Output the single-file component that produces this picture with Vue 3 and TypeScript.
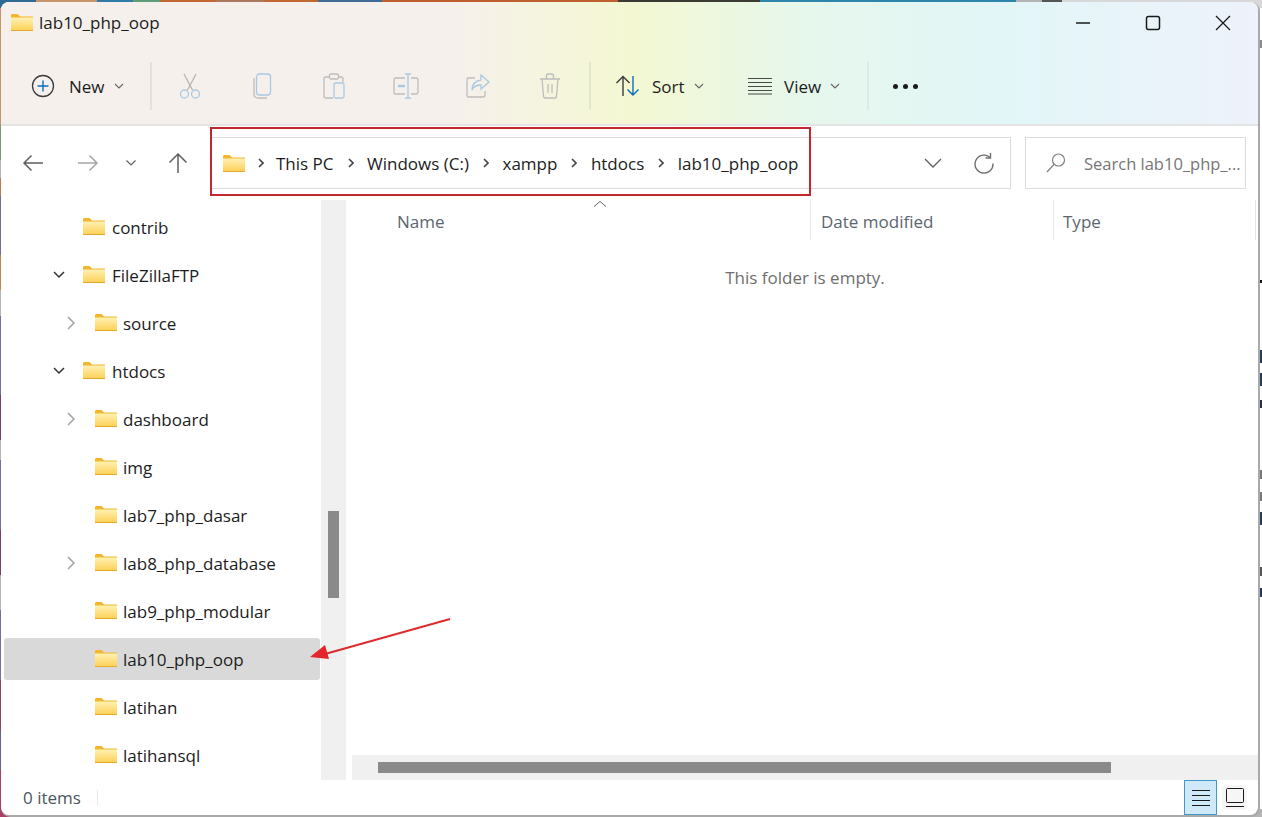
<script setup lang="ts">
interface TreeRow {
  name: string;
  depth: number;
  arrow?: "open" | "closed";
  selected?: boolean;
}

const rows: TreeRow[] = [
  { name: "contrib", depth: 1 },
  { name: "FileZillaFTP", depth: 1, arrow: "open" },
  { name: "source", depth: 2, arrow: "closed" },
  { name: "htdocs", depth: 1, arrow: "open" },
  { name: "dashboard", depth: 2, arrow: "closed" },
  { name: "img", depth: 2 },
  { name: "lab7_php_dasar", depth: 2 },
  { name: "lab8_php_database", depth: 2, arrow: "closed" },
  { name: "lab9_php_modular", depth: 2 },
  { name: "lab10_php_oop", depth: 2, selected: true },
  { name: "latihan", depth: 2 },
  { name: "latihansql", depth: 2 },
];

const crumbs = ["This PC", "Windows (C:)", "xampp", "htdocs", "lab10_php_oop"];

// slivers of the page behind the window, seen past its right edge
const slivers = [
  { top: 40, h: 8, c: "#8a8a8a" },
  { top: 280, h: 3, c: "#111" },
  { top: 350, h: 13, c: "#2b3a55" },
  { top: 373, h: 13, c: "#2b3a55" },
  { top: 400, h: 8, c: "#2b3040" },
  { top: 470, h: 9, c: "#7a7a7a" },
  { top: 492, h: 9, c: "#7a7a7a" },
  { top: 512, h: 13, c: "#2b3a55" },
  { top: 567, h: 9, c: "#555" },
  { top: 588, h: 9, c: "#2b3a55" },
];
</script>

<template>
  <div class="desktop">
    <i
      v-for="s in slivers"
      :key="s.top"
      class="sliver"
      :style="{ top: s.top + 'px', height: s.h + 'px', background: s.c }"
    ></i>

    <div class="window">
      <header class="chrome">
        <div class="titlebar">
          <svg class="folder title-folder" viewBox="0 0 22 17">
            <defs>
              <linearGradient id="fg" x1="0" y1="0" x2="0" y2="1">
                <stop offset="0" stop-color="#fff1b4" />
                <stop offset="1" stop-color="#fccf52" />
              </linearGradient>
            </defs>
            <path d="M0 1.500C0 .6.6 0 1.500 0h5l2.500 2.500H22V5H0z" fill="#f4b52a" />
            <path d="M0 3.500h22V17H0z" fill="url(#fg)" />
            <path d="M0 16h22v1H0z" fill="#e2a92f" />
          </svg>
          <span class="title">lab10_php_oop</span>
          <div class="win-controls">
            <svg width="16" height="16" viewBox="0 0 16 16"><path d="M1 8h14" stroke="#1a1a1a" stroke-width="1.300" /></svg>
            <svg width="16" height="16" viewBox="0 0 16 16"><rect x="1.500" y="1.500" width="13" height="13" rx="2" fill="none" stroke="#1a1a1a" stroke-width="1.500" /></svg>
            <svg width="16" height="16" viewBox="0 0 16 16"><path d="M1 1l14 14M15 1L1 15" stroke="#1a1a1a" stroke-width="1.300" /></svg>
          </div>
        </div>

        <div class="commands">
          <div class="cmd cmd-new">
            <svg width="24" height="24" viewBox="0 0 24 24">
              <circle cx="12" cy="12" r="10.500" fill="none" stroke="#3c3c3c" stroke-width="1.300" />
              <path d="M12 6.500v11M6.500 12h11" stroke="#0a6ebd" stroke-width="1.400" />
            </svg>
            <span>New</span>
            <svg class="chev" viewBox="0 0 10 6"><path d="M1 1l4 4 4-4" /></svg>
          </div>
          <i class="sep sep-a"></i>

          <div class="tool">
            <svg width="24" height="26" viewBox="0 0 24 26" fill="none" stroke-width="1.300">
              <path d="M6 1l8.500 16M18 1L9.500 17" stroke="#b4b4b4" />
              <circle cx="6.500" cy="21" r="4" stroke="#a9c9e4" />
              <circle cx="17.500" cy="21" r="4" stroke="#a9c9e4" />
            </svg>
          </div>
          <div class="tool">
            <svg width="20" height="26" viewBox="0 0 20 26" fill="none" stroke-width="1.300">
              <path d="M2 5v16c0 2.500 1.500 4 4 4h9" stroke="#bdbdbd" />
              <rect x="4.500" y="1" width="14" height="21" rx="3" stroke="#a9c9e4" />
            </svg>
          </div>
          <div class="tool">
            <svg width="22" height="26" viewBox="0 0 22 26" fill="none" stroke-width="1.300">
              <path d="M7 4H3a2 2 0 0 0-2 2v17a2 2 0 0 0 2 2h7M15 4h3a2 2 0 0 1 2 2v3" stroke="#bdbdbd" />
              <rect x="6.500" y="1" width="9" height="5" rx="1.500" stroke="#bdbdbd" />
              <rect x="11" y="10" width="10" height="15" rx="1.500" stroke="#a9c9e4" />
            </svg>
          </div>
          <div class="tool">
            <svg width="26" height="26" viewBox="0 0 26 26" fill="none" stroke-width="1.300">
              <path d="M12 5H3a2 2 0 0 0-2 2v12a2 2 0 0 0 2 2h9M18 5h5a2 2 0 0 1 2 2v12a2 2 0 0 1-2 2h-5" stroke="#bdbdbd" />
              <path d="M15 1v24M12 1h6M12 25h6" stroke="#a9c9e4" />
              <path d="M5 13h7" stroke="#a9c9e4" stroke-width="2.400" />
            </svg>
          </div>
          <div class="tool">
            <svg width="24" height="24" viewBox="0 0 24 24" fill="none" stroke-width="1.300">
              <path d="M9 4H3a2 2 0 0 0-2 2v15a2 2 0 0 0 2 2h14a2 2 0 0 0 2-2v-4" stroke="#bdbdbd" />
              <path d="M15 1l8 7-8 7v-4c-4 0-7 1-9 5 0-6 3-9 9-10z" stroke="#a9c9e4" />
            </svg>
          </div>
          <div class="tool">
            <svg width="22" height="26" viewBox="0 0 22 26" fill="none" stroke="#bdbdbd" stroke-width="1.300">
              <path d="M1 6h20M7.500 6V3a2 2 0 0 1 2-2h3a2 2 0 0 1 2 2v3M3 6l1.500 17a2 2 0 0 0 2 2h9a2 2 0 0 0 2-2L19 6M9 11v9M13 11v9" />
            </svg>
          </div>
          <i class="sep sep-b"></i>

          <div class="cmd cmd-sort">
            <svg width="26" height="22" viewBox="0 0 26 22" fill="none" stroke-width="1.400">
              <path d="M8 21V2M1.500 8L8 1.500 14.500 8" stroke="#3c3c3c" />
              <path d="M18 1v19M12.500 14.500L18 20l5.500-5.500" stroke="#0a6ebd" />
            </svg>
            <span>Sort</span>
            <svg class="chev" viewBox="0 0 10 6"><path d="M1 1l4 4 4-4" /></svg>
          </div>
          <div class="cmd cmd-view">
            <svg width="24" height="18" viewBox="0 0 24 18" fill="none" stroke="#4a4a4a" stroke-width="1.200">
              <path d="M0 1.500h24M0 5.500h24M0 9.500h24M0 13.500h24M0 17h24" />
            </svg>
            <span>View</span>
            <svg class="chev" viewBox="0 0 10 6"><path d="M1 1l4 4 4-4" /></svg>
          </div>
          <i class="sep sep-c"></i>
          <div class="dots"><b></b><b></b><b></b></div>
        </div>
      </header>

      <nav class="navbar">
        <div class="nav-btns">
          <svg class="n-back" width="22" height="18" viewBox="0 0 22 18" fill="none" stroke="#5f5f5f" stroke-width="1.500"><path d="M21 9H2M9.500 1.500L2 9l7.500 7.500" /></svg>
          <svg class="n-fwd" width="22" height="18" viewBox="0 0 22 18" fill="none" stroke="#a6a6a6" stroke-width="1.500"><path d="M1 9h19M12.500 1.500L20 9l-7.500 7.500" /></svg>
          <svg class="n-drop" width="10" height="6" viewBox="0 0 10 6" fill="none" stroke="#5f5f5f" stroke-width="1.200"><path d="M.5.500L5 5 9.500.5" /></svg>
          <svg class="n-up" width="20" height="22" viewBox="0 0 20 22" fill="none" stroke="#5f5f5f" stroke-width="1.500"><path d="M10 21V2M1.500 10.500L10 2l8.500 8.500" /></svg>
        </div>

        <div class="address">
          <svg class="folder" viewBox="0 0 22 17">
            <path d="M0 1.500C0 .6.6 0 1.500 0h5l2.500 2.500H22V5H0z" fill="#f4b52a" />
            <path d="M0 3.500h22V17H0z" fill="url(#fg)" />
            <path d="M0 16h22v1H0z" fill="#e2a92f" />
          </svg>
          <template v-for="c in crumbs" :key="c">
            <svg class="crumb-chev" width="6" height="10" viewBox="0 0 6 10" fill="none" stroke="#444" stroke-width="1.600"><path d="M1 1l4 4-4 4" /></svg>
            <span class="crumb">{{ c }}</span>
          </template>
          <svg class="addr-drop" width="18" height="10" viewBox="0 0 18 10" fill="none" stroke="#5f5f5f" stroke-width="1.300"><path d="M1 1l8 8 8-8" /></svg>
          <svg class="addr-refresh" width="20" height="22" viewBox="0 0 20 22" fill="none" stroke="#6e6e6e" stroke-width="1.400"><path d="M15.500 5A9 9 0 1 0 19 11.500M16.500 1v5h-5" /></svg>
        </div>

        <div class="search">
          <svg width="20" height="20" viewBox="0 0 20 20" fill="none" stroke="#808080" stroke-width="1.200"><circle cx="12.500" cy="7" r="6" /><path d="M8 11.500L1 19" /></svg>
          <span>Search lab10_php_...</span>
        </div>
      </nav>

      <div class="body">
        <aside class="tree">
          <div class="tree-rows">
            <div
              v-for="r in rows"
              :key="r.name"
              class="row"
              :class="[{ selected: r.selected }, 'depth-' + r.depth]"
            >
              <span class="arrow">
                <svg v-if="r.arrow === 'open'" width="12" height="8" viewBox="0 0 12 8" fill="none" stroke="#333" stroke-width="1.500"><path d="M1 1l5 5 5-5" /></svg>
                <svg v-else-if="r.arrow === 'closed'" width="8" height="14" viewBox="0 0 8 14" fill="none" stroke="#a0a0a0" stroke-width="1.500"><path d="M1 1l6 6-6 6" /></svg>
              </span>
              <svg class="folder" viewBox="0 0 22 17">
                <path d="M0 1.500C0 .6.6 0 1.500 0h5l2.500 2.500H22V5H0z" fill="#f4b52a" />
                <path d="M0 3.500h22V17H0z" fill="url(#fg)" />
                <path d="M0 16h22v1H0z" fill="#e2a92f" />
              </svg>
              <span class="label">{{ r.name }}</span>
            </div>
          </div>
          <div class="vscroll"><div class="vthumb"></div></div>
        </aside>

        <main class="files">
          <div class="columns">
            <svg class="sort-mark" width="14" height="6" viewBox="0 0 14 6" fill="none" stroke="#666"><path d="M1 5.500l6-5 6 5" /></svg>
            <div class="col col-name">Name</div>
            <div class="col col-date">Date modified</div>
            <div class="col col-type">Type</div>
          </div>
          <div class="empty">This folder is empty.</div>
          <div class="hscroll"><div class="hthumb"></div></div>
        </main>
      </div>

      <footer class="status">
        <span class="count">0 items</span>
        <i class="status-sep"></i>
        <div class="view-btns">
          <div class="vbtn active">
            <svg width="18" height="16" viewBox="0 0 18 16" fill="none" stroke="#1a1a1a" stroke-width="1"><path d="M0 .5h18M0 5.500h18M0 10.500h18M0 15.500h18" /></svg>
          </div>
          <div class="vbtn">
            <svg width="18" height="19" viewBox="0 0 18 19" fill="none" stroke="#1a1a1a" stroke-width="1"><rect x=".5" y=".5" width="17" height="14" rx="1" /><path d="M0 18.500h18" /></svg>
          </div>
        </div>
      </footer>
    </div>

    <!-- annotations drawn on top of the screenshot -->
    <div class="red-box"></div>
    <svg class="red-arrow" width="150" height="50" viewBox="0 0 150 50">
      <path d="M140 1L15 36" stroke="#dd2c2f" stroke-width="2" fill="none" />
      <path d="M0 39l15-12 4 14z" fill="#e3262b" />
    </svg>
  </div>
</template>

<style>
html,
body {
  margin: 0;
  overflow: hidden;
}
</style>

<style scoped>
.desktop {
  position: relative;
  width: 1262px;
  height: 817px;
  padding: 2px 4px 2px 1px;
  box-sizing: border-box;
  overflow: hidden;
  font-family: "Open Sans", "Noto Sans", sans-serif;
  font-size: 17px;
  color: #1c1c1c;
  background:
    linear-gradient(90deg, #2d6a94 0 36px, #c8946a 36px 97px, #2f7aa6 97px 133px, #5f9c78 133px 160px, #c0672f 160px 216px, #a97a5e 216px 264px, #c0672f 264px 318px, #3f6b96 318px 382px, #bd5f2e 382px 618px, #3b3a33 618px 760px, #2f86ad 760px 1016px, #b4b4b4 1016px 1042px, #555 1042px 1062px, #d8d8d8 1062px) 0 0 / 100% 8px no-repeat,
    linear-gradient(90deg, #a8406a 0 300px, #8f4a5a 300px 490px, #3f3d3a 490px 595px, #a8683c 595px 800px, #9a5a3a 800px 1015px, #b4b4b4 1015px) 0 100% / 100% 8px no-repeat,
    linear-gradient(90deg, #fff, #fff) 1258px 8px / 4px 801px no-repeat,
    linear-gradient(180deg, #c99468 0 125px, #7d9a72 125px 160px, #b4b4b4 160px 178px, #b87c48 178px 196px, #7b6a94 196px 255px, #b98c4c 255px 290px, #b4b4b4 290px 316px, #77709a 316px 395px, #7a3f66 395px 440px, #b4b4b4 440px 460px, #77709a 460px 530px, #7a3f66 530px 575px, #b4b4b4 575px 610px, #77709a 610px 680px, #8a4a5a 680px 730px, #6a5f90 730px 770px, #b03a68 770px);
}
.sliver {
  position: absolute;
  left: 1259px;
  width: 3px;
}
.window {
  position: relative;
  width: 1257px;
  height: 813px;
  display: flex;
  flex-direction: column;
  background: #fff;
  border-radius: 8px;
  box-shadow: 1px 1px 0 1px #a9a9a9;
  overflow: hidden;
}
.chrome {
  height: 124px;
  flex: none;
  box-sizing: border-box;
  border-bottom: 2px solid #e4e4e4;
  background: linear-gradient(90deg, #f6f0ec 0, #f6f0ec 36%, #f4f8d2 50%, #e6f7ec 64%, #e2f6f8 80%, #eef2fa 100%);
}
.titlebar {
  height: 46px;
  display: flex;
  align-items: center;
  padding-left: 10px;
}
.folder {
  width: 22px;
  height: 17px;
  flex: none;
  overflow: visible;
}
.title-folder {
  margin-top: -6px;
}
.title {
  margin-left: 6px;
  margin-top: -5px;
}
.win-controls {
  margin-left: auto;
  display: flex;
  gap: 54px;
  margin-right: 27px;
  margin-top: -4px;
}
.commands {
  height: 76px;
  display: flex;
  align-items: center;
}
.cmd {
  display: flex;
  align-items: center;
}
.cmd span {
  margin-left: 14px;
}
.cmd-new {
  width: 149px;
  padding-left: 30px;
  box-sizing: border-box;
}
.chev {
  width: 10px;
  height: 6px;
  margin-left: 9px;
  fill: none;
  stroke: #666;
  stroke-width: 1.100;
}
.sep {
  width: 2px;
  height: 48px;
  background: #e4e0dc;
  flex: none;
}
.sep-a {
  margin-right: 2px;
}
.tool {
  width: 72px;
  flex: none;
  display: flex;
  justify-content: center;
}
.sep-b {
  margin-left: 3px;
  background: #e2e8cc;
}
.cmd-sort {
  width: 115px;
  box-sizing: border-box;
  padding-left: 24px;
}
.cmd-sort span {
  margin-left: 11px;
}
.cmd-view {
  width: 163px;
  box-sizing: border-box;
  padding-left: 42px;
}
.cmd-view span {
  margin-left: 12px;
}
.sep-c {
  margin-left: -2px;
  background: #dbe9e7;
}
.dots {
  display: flex;
  gap: 5px;
  margin-left: 24px;
}
.dots b {
  width: 5px;
  height: 5px;
  border-radius: 50%;
  background: #1c1c1c;
}
.navbar {
  height: 74px;
  flex: none;
  box-sizing: border-box;
  display: flex;
  align-items: center;
}
.nav-btns {
  width: 210px;
  flex: none;
  display: flex;
  align-items: center;
  box-sizing: border-box;
  padding-left: 21px;
}
.n-fwd {
  margin-left: 33px;
}
.n-drop {
  margin-left: 27px;
}
.n-up {
  margin-left: 32px;
}
.address {
  width: 800px;
  height: 52px;
  flex: none;
  box-sizing: border-box;
  border: 1px solid #dcdcdc;
  display: flex;
  align-items: center;
  padding-left: 11px;
}
.crumb-chev {
  margin: 0 13.500px 0 14px;
  flex: none;
}
.address > .folder + .crumb-chev {
  margin: 0 12px 0 13px;
}
.addr-drop {
  margin-left: auto;
}
.addr-refresh {
  margin: 0 16px 0 32px;
}
.search {
  width: 221px;
  height: 52px;
  margin-left: 14px;
  flex: none;
  box-sizing: border-box;
  border: 1px solid #dcdcdc;
  display: flex;
  align-items: center;
  gap: 18px;
  padding-left: 20px;
  font-size: 16.500px;
  color: #767676;
  white-space: nowrap;
  overflow: hidden;
}
.body {
  flex: 1;
  min-height: 0;
  display: flex;
}
.tree {
  width: 345px;
  flex: none;
  display: flex;
}
.tree-rows {
  width: 320px;
  flex: none;
  padding-top: 3px;
}
.row {
  height: 48px;
  position: relative;
  display: flex;
  align-items: center;
}
.row.selected::before {
  content: "";
  position: absolute;
  left: 3px;
  right: 1px;
  top: 3px;
  bottom: 3px;
  background: #d9d9d9;
  border-radius: 3px;
}
.row > * {
  position: relative;
}
.arrow {
  width: 14px;
  display: flex;
  justify-content: center;
  flex: none;
}
.depth-1 {
  padding-left: 51px;
}
.depth-2 {
  padding-left: 63px;
}
.row .folder {
  margin-left: 17px;
  margin-top: -1px;
}
.label {
  margin-left: 7px;
}
.depth-2 .label {
  margin-left: 6px;
}
.vscroll {
  width: 25px;
  background: #f0f0f0;
  position: relative;
}
.vthumb {
  position: absolute;
  left: 7px;
  width: 11px;
  top: 311px;
  height: 87px;
  background: #8a8a8a;
}
.files {
  flex: 1;
  min-width: 0;
  display: flex;
  flex-direction: column;
  padding-left: 4px;
  position: relative;
}
.columns {
  height: 40px;
  display: flex;
  flex: none;
  color: #5b6570;
  align-items: stretch;
}
.sort-mark {
  position: absolute;
  left: 247px;
  top: 1px;
}
.col {
  display: flex;
  align-items: center;
  padding-top: 3px;
  box-sizing: border-box;
  border-right: 1px solid #e6e6e6;
}
.col-name {
  width: 461px;
  padding-left: 47px;
  box-sizing: border-box;
}
.col-date {
  width: 243px;
  padding-left: 10px;
}
.col-type {
  flex: 1;
  padding-left: 9px;
  margin-right: 2px;
}
.empty {
  flex: 1;
  text-align: center;
  padding-top: 26px;
  color: #6e6e6e;
  margin-left: 2px;
}
.hscroll {
  height: 25px;
  flex: none;
  background: #f0f0f0;
  margin-left: 2px;
  display: flex;
  align-items: center;
  padding-left: 26px;
}
.hthumb {
  width: 733px;
  height: 11px;
  background: #8a8a8a;
}
.status {
  height: 35px;
  flex: none;
  display: flex;
  align-items: center;
  padding-left: 22px;
  color: #4b5560;
}
.status-sep {
  width: 1px;
  height: 16px;
  background: #e8e8e8;
  margin-left: 16px;
}
.view-btns {
  margin-left: auto;
  margin-right: 11px;
  display: flex;
  align-items: center;
  gap: 5px;
  height: 100%;
}
.vbtn {
  width: 25px;
  height: 25px;
  display: flex;
  align-items: center;
  justify-content: center;
  background: #f6f6f6;
  border-radius: 3px;
}
.vbtn.active {
  width: 33px;
  height: 35px;
  box-sizing: border-box;
  background: #cfe9f8;
  border: 1px solid #3d9ac9;
  border-radius: 0;
}
.red-box {
  position: absolute;
  left: 210px;
  top: 127px;
  width: 601px;
  height: 69px;
  box-sizing: border-box;
  border: 2px solid #c1272d;
}
.red-arrow {
  position: absolute;
  left: 310px;
  top: 618px;
}
</style>
